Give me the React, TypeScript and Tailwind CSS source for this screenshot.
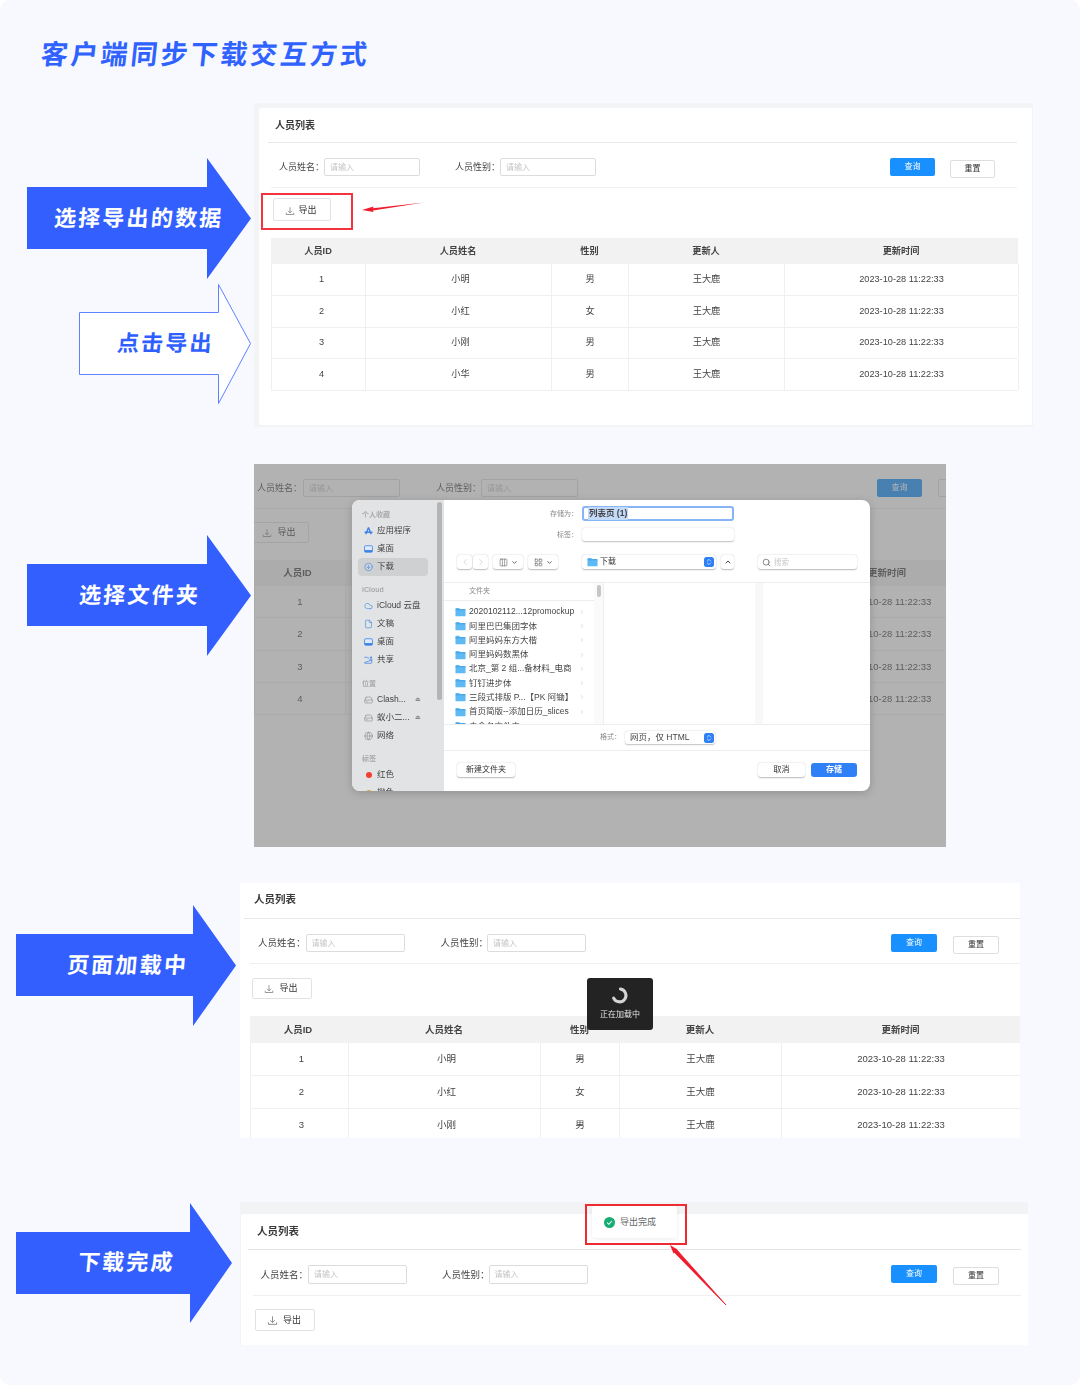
import React from 'react';
import { ChevronLeft, ChevronRight, ChevronDown, ChevronUp, ChevronsUpDown, Search, Columns3, LayoutGrid, Cloud, File, HardDrive, Globe, CircleArrowDown } from 'lucide-react';

function DownloadIcon({ cls }: { cls: string }) {
  return (
    <svg viewBox="0 0 12 12" className={cls} fill="none" stroke="#666" strokeWidth="0.8">
      <path d="M6 1.5V8M3.6 5.8 6 8.2l2.4-2.4M1.5 8v2.2h9V8" />
    </svg>
  );
}

function BlockArrow({ cls, points, fill, stroke, textCls, text }: { cls: string; points: string; fill: string; stroke?: string; textCls: string; text: string }) {
  return (
    <div className={`relative flex shrink-0 items-center ${cls}`}>
      <svg className="absolute inset-0 h-full w-full">
        <polygon points={points} fill={fill} stroke={stroke ?? 'none'} strokeWidth="1" />
      </svg>
      <span className={`relative inline-block -skew-x-[5deg] whitespace-nowrap text-[22px] font-bold leading-none tracking-[2.2px] ${textCls}`}>{text}</span>
    </div>
  );
}

function Title({ cls }: { cls: string }) {
  return <div className={`flex shrink-0 items-center font-bold text-[#3a3a3a] ${cls}`}>人员列表</div>;
}

function Filters({ rowCls, labelCls, inputCls, groupCls, queryCls, resetCls }: { rowCls: string; labelCls: string; inputCls: string; groupCls: string; queryCls: string; resetCls: string }) {
  const field = (label: string, extra: string) => (
    <div className={`flex shrink-0 items-center ${extra}`}>
      <span className={`whitespace-nowrap pt-px text-[#444] ${labelCls}`}>{label}：</span>
      <span className={`flex items-center rounded-[2px] border border-[#dcdcdc] bg-white pl-[5px] pt-px text-[8px] text-[#c4c4c4] ${inputCls}`}>请输入</span>
    </div>
  );
  return (
    <div className={`flex shrink-0 items-start ${rowCls}`}>
      {field('人员姓名', '')}
      {field('人员性别', groupCls)}
      <span className={`ml-auto flex shrink-0 items-center justify-center rounded-[2px] bg-[#1890ff] text-[8px] text-white ${queryCls}`}>查询</span>
      <span className={`flex shrink-0 items-center justify-center rounded-[2px] border border-[#dedede] bg-white text-[8px] text-[#333] ${resetCls}`}>重置</span>
    </div>
  );
}

function ExportButton({ cls, iconCls, textCls }: { cls: string; iconCls: string; textCls: string }) {
  return (
    <div className={`flex shrink-0 items-center justify-center rounded-[2px] border border-[#e2e2e2] bg-white text-[#333] ${cls}`}>
      <DownloadIcon cls={iconCls} />
      <span className={textCls}>导出</span>
    </div>
  );
}

const people = [
  ['1', '小明', '男'],
  ['2', '小红', '女'],
  ['3', '小刚', '男'],
  ['4', '小华', '男'],
];

function PeopleTable({ cls, gridCls, headCls, rowCls, head1, cell1, cell2, textCls }: { cls: string; gridCls: string; headCls: string; rowCls: string; head1?: string; cell1: string; cell2: string; textCls: string }) {
  const cell = 'flex items-center justify-center border-r border-[#f0f0f0]';
  return (
    <div className={`shrink-0 ${cls} ${textCls}`}>
      <div className={`grid bg-[#f2f2f2] font-bold text-[#444] ${gridCls} ${headCls}`}>
        <div className={`flex items-center justify-center ${head1 ?? ''}`}>人员ID</div>
        <div className="flex items-center justify-center">人员姓名</div>
        <div className="flex items-center justify-center">性别</div>
        <div className="flex items-center justify-center">更新人</div>
        <div className="flex items-center justify-center">更新时间</div>
      </div>
      {people.map((p) => (
        <div key={p[0]} className={`grid border-b border-l border-[#f0f0f0] text-[#444] ${gridCls} ${rowCls}`}>
          <div className={`${cell} ${cell1}`}>{p[0]}</div>
          <div className={`${cell} ${cell2}`}>{p[1]}</div>
          <div className={cell}>{p[2]}</div>
          <div className={cell}>王大鹿</div>
          <div className={cell}>2023-10-28 11:22:33</div>
        </div>
      ))}
    </div>
  );
}

function Folder() {
  return (
    <svg viewBox="0 0 12 10" className="h-[10px] w-[11px] shrink-0">
      <path d="M0.5 1.5Q0.5 .5 1.5 .5H4.5L5.5 1.6H10.5Q11.5 1.6 11.5 2.6V9Q11.5 9.7 10.5 9.7H1.5Q.5 9.7 .5 9Z" fill="#5fb9f2" />
      <path d="M.5 2.6H11.5" stroke="#2f8fd6" strokeWidth=".6" />
    </svg>
  );
}

function DesktopIcon() {
  return (
    <svg viewBox="0 0 10 10" className="h-[10px] w-[10px]">
      <rect x=".6" y="1.4" width="8.8" height="7.2" rx="1.2" fill="#dfe9fb" stroke="#3b82e8" strokeWidth=".9" />
      <rect x="1" y="6.2" width="8" height="2.2" fill="#3b82e8" />
    </svg>
  );
}

function ShareIcon() {
  return (
    <svg viewBox="0 0 11 10" className="h-[10px] w-[10px]" fill="none" stroke="#3b82e8" strokeWidth=".9">
      <path d="M.6 2.4Q.6 1.6 1.4 1.6H3.6L4.4 2.6H6.4M9.4 5V8.2Q9.4 9 8.6 9H1.4Q.6 9 .6 8.2Z" />
      <circle cx="8.6" cy="1.8" r="1.2" fill="#3b82e8" stroke="none" />
      <path d="M6.8 4.6Q8.6 2.8 10.4 4.6" strokeWidth="1" />
    </svg>
  );
}

function SideLabel({ cls, text }: { cls: string; text: string }) {
  return <div className={`flex h-[13px] items-center pl-[10px] text-[7px] font-bold text-[#a9aaac] ${cls}`}>{text}</div>;
}

function SideItem({ icon, text, active, eject }: { icon: React.ReactNode; text: string; active?: boolean; eject?: boolean }) {
  return (
    <div className={`ml-[6px] flex h-[18px] w-[70px] items-center gap-[4px] rounded-[4px] pl-[6px] text-[8.5px] text-[#444] ${active ? 'bg-[#cfd0d1]' : ''}`}>
      <span className="flex w-[9px] shrink-0 justify-center">{icon}</span>
      <span className="whitespace-nowrap">{text}</span>
      {eject && <span className="ml-auto mr-[7px] text-[6px] text-[#888]">⏏</span>}
    </div>
  );
}

const blueIcon = 'h-[10px] w-[10px] text-[#4a90e8]';
const grayIcon = 'h-[10px] w-[10px] text-[#8a8a8a]';

function MiniBtn({ cls, children }: { cls: string; children: React.ReactNode }) {
  return <div className={`flex h-[14px] shrink-0 items-center justify-center rounded-[3px] bg-white shadow-[0_0.5px_1.5px_rgba(0,0,0,0.28)] ${cls}`}>{children}</div>;
}

function BlueStepper({ cls }: { cls: string }) {
  return (
    <span className={`flex h-[10px] w-[10px] items-center justify-center rounded-[2.5px] bg-[#2f80f7] ${cls}`}>
      <ChevronsUpDown className="h-[8px] w-[8px] text-white" strokeWidth={2} />
    </span>
  );
}

const folders = ['2020102112...12promockup', '阿里巴巴集团字体', '阿里妈妈东方大楷', '阿里妈妈数黑体', '北京_第 2 组...备材料_电商', '钉钉进步体', '三段式排版 P...【PK 阿锄】', '首页简版--添加日历_slices', '未命名文件夹'];

function SaveDialog() {
  return (
    <div className="absolute left-[98px] top-[36px] flex h-[291px] w-[518px] overflow-hidden rounded-[8px] bg-white shadow-[0_2px_8px_rgba(0,0,0,0.18)] blur-[0.3px]">
      <div className="relative w-[92px] shrink-0 overflow-hidden bg-[#e2e3e4] pt-[8.5px]">
        <div className="absolute right-[2px] top-[2px] h-[198px] w-[5px] rounded-full bg-[#b4b5b6]" />
        <SideLabel cls="" text="个人收藏" />
        <SideItem text="应用程序" icon={<svg viewBox="0 0 10 10" className="h-[10px] w-[10px]" fill="none" stroke="#3b82e8" strokeWidth="1.5"><path d="M5 1 2 8.6M5 1l3 7.6M.6 6.4h8.8" /></svg>} />
        <SideItem text="桌面" icon={<DesktopIcon />} />
        <SideItem text="下载" active icon={<CircleArrowDown className={blueIcon} strokeWidth={1.8} />} />
        <SideLabel cls="mt-[8px]" text="iCloud" />
        <SideItem text="iCloud 云盘" icon={<Cloud className={blueIcon} strokeWidth={1.8} />} />
        <SideItem text="文稿" icon={<File className={blueIcon} strokeWidth={1.8} />} />
        <SideItem text="桌面" icon={<DesktopIcon />} />
        <SideItem text="共享" icon={<ShareIcon />} />
        <SideLabel cls="mt-[9px]" text="位置" />
        <SideItem text="Clash..." eject icon={<HardDrive className={grayIcon} strokeWidth={1.6} />} />
        <SideItem text="蚁小二..." eject icon={<HardDrive className={grayIcon} strokeWidth={1.6} />} />
        <SideItem text="网络" icon={<Globe className={grayIcon} strokeWidth={1.6} />} />
        <SideLabel cls="mt-[8px]" text="标签" />
        <SideItem text="红色" icon={<span className="h-[6px] w-[6px] rounded-full bg-[#f0402f]" />} />
        <SideItem text="橙色" icon={<span className="h-[6px] w-[6px] rounded-full bg-[#f0a030]" />} />
      </div>
      <div className="flex min-w-0 flex-1 flex-col">
        <div className="mt-[6px] flex h-[15px] shrink-0 items-center">
          <span className="w-[134px] pt-px text-right text-[7px] text-[#8a8a8a]">存储为：</span>
          <div className="ml-[4px] flex h-[15px] w-[152px] items-center rounded-[3px] border-2 border-[#86b4f6] pl-[4px] text-[8.5px] font-bold text-[#444]">
            <span className="bg-[#c3daf9] px-[1px]">列表页 (1)</span>
          </div>
        </div>
        <div className="mt-[7px] flex h-[13px] shrink-0 items-center">
          <span className="w-[134px] pt-[2px] text-right text-[7px] text-[#8a8a8a]">标签：</span>
          <div className="ml-[4px] h-[13px] w-[152px] rounded-[3px] bg-white shadow-[0_0.5px_1.5px_rgba(0,0,0,0.25)]" />
        </div>
        <div className="ml-[13px] mt-[14px] flex h-[14px] shrink-0 items-center">
          <MiniBtn cls="w-[15px]"><ChevronLeft className="h-[10px] w-[10px] text-[#bbb]" strokeWidth={1.4} /></MiniBtn>
          <MiniBtn cls="ml-[1px] w-[15px]"><ChevronRight className="h-[10px] w-[10px] text-[#bbb]" strokeWidth={1.4} /></MiniBtn>
          <MiniBtn cls="ml-[5px] w-[30px] gap-[3px]"><Columns3 className="h-[9px] w-[9px] text-[#666]" strokeWidth={1.6} /><ChevronDown className="h-[7px] w-[7px] text-[#555]" strokeWidth={3} /></MiniBtn>
          <MiniBtn cls="ml-[5px] w-[30px] gap-[3px]"><LayoutGrid className="h-[9px] w-[9px] text-[#777]" strokeWidth={2} /><ChevronDown className="h-[7px] w-[7px] text-[#555]" strokeWidth={3} /></MiniBtn>
          <MiniBtn cls="ml-[24px] w-[134px] justify-start pl-[5px]">
            <Folder />
            <span className="ml-[2px] text-[8px] text-[#333]">下载</span>
            <BlueStepper cls="ml-auto mr-[2px]" />
          </MiniBtn>
          <MiniBtn cls="ml-[5px] w-[13px]"><ChevronUp className="h-[8px] w-[8px] text-[#444]" strokeWidth={3} /></MiniBtn>
          <MiniBtn cls="ml-[24px] w-[99px] justify-start pl-[4px]">
            <Search className="h-[9px] w-[9px] text-[#666]" strokeWidth={2} />
            <span className="ml-[3px] pt-px text-[7.5px] text-[#c8c8c8]">搜索</span>
          </MiniBtn>
        </div>
        <div className="mt-[13px] flex h-[143px] shrink-0 border-y border-[#eeeeee]">
          <div className="w-[150px] shrink-0 overflow-hidden">
            <div className="flex h-[18px] items-center border-b border-[#eeeeee] pl-[25px] text-[7px] text-[#8a8a8a]">文件夹</div>
            <div className="pt-[3.5px]">
              {folders.map((f) => (
                <div key={f} className="flex h-[14.3px] items-center pl-[11px] text-[8.5px] text-[#444]">
                  <Folder />
                  <span className="ml-[3px] whitespace-nowrap">{f}</span>
                  <ChevronRight className="ml-auto mr-[9px] h-[6px] w-[6px] text-[#bbb]" strokeWidth={2} />
                </div>
              ))}
            </div>
          </div>
          <div className="w-[10px] shrink-0 border-r border-[#eeeeee] bg-[#fafafa] pl-[3px] pt-[2px]">
            <div className="h-[12px] w-[4px] rounded-full bg-[#c6c6c6]" />
          </div>
          <div className="w-[151px] shrink-0" />
          <div className="w-[8px] shrink-0 bg-[#f8f8f8]" />
        </div>
        <div className="flex h-[26px] shrink-0 items-center border-b border-[#eeeeee]">
          <span className="w-[177px] text-right text-[7px] text-[#8a8a8a]">格式：</span>
          <div className="ml-[4px] flex h-[13px] w-[90px] items-center rounded-[3px] bg-white pl-[5px] text-[8.5px] text-[#444] shadow-[0_0.5px_1.5px_rgba(0,0,0,0.25)]">
            网页，仅 HTML
            <BlueStepper cls="ml-auto mr-[1px]" />
          </div>
        </div>
        <div className="flex shrink-0 pl-[13px] pt-[12px]">
          <MiniBtn cls="w-[58px] text-[8px] text-[#333]">新建文件夹</MiniBtn>
          <MiniBtn cls="ml-[243px] w-[47px] text-[8px] text-[#333]">取消</MiniBtn>
          <div className="ml-[6px] flex h-[14px] w-[46px] items-center justify-center rounded-[3px] bg-[#2f80f7] text-[8px] font-bold text-white">存储</div>
        </div>
      </div>
    </div>
  );
}

export default function App() {
  return (
    <div className="h-[1385px] w-[1080px] overflow-hidden bg-white font-['Liberation_Sans','Noto_Sans_CJK_SC',sans-serif]">
      <div className="h-full w-full overflow-hidden rounded-[10px] bg-[#f7f9fe]">
        <div className="flex h-[103px] items-start pl-[41px] pt-[36px]">
          <h1 className="inline-block -skew-x-[6deg] text-[27px] font-bold leading-[38px] tracking-[2.9px] text-[#2f62ff]">客户端同步下载交互方式</h1>
        </div>

        {/* step 1 */}
        <section className="flex h-[324px]">
          <div className="flex w-[254px] shrink-0 flex-col pl-[27px] pt-[55px]">
            <BlockArrow cls="h-[121px] w-[224px] pl-[27px]" fill="#335fff" points="0,29 180,29 180,0 224,60.5 180,121 180,91 0,91" textCls="text-white" text="选择导出的数据" />
            <BlockArrow cls="ml-[52px] mt-[5px] h-[120px] w-[172px] pl-[38px]" fill="#ffffff" stroke="#5f83ff" points="0.5,28.5 139.5,28.5 139.5,0.5 171.5,59.5 139.5,119.5 139.5,90.5 0.5,90.5" textCls="text-[#2f5fff]" text="点击导出" />
          </div>
          <div className="relative h-[324px] w-[779px] shrink-0 bg-[#f3f4f6] pl-[5px] pt-[5px]">
            <div className="flex h-[317px] w-[773px] flex-col rounded-[2px] bg-white blur-[0.35px]">
              <Title cls="h-[34px] pl-[16px] text-[10px]" />
              <div className="ml-[9px] mr-[15px] h-px shrink-0 bg-[#e8e8e8]" />
              <Filters rowCls="h-[44px] pl-[20px] pr-[37px] pt-[15px]" labelCls="text-[9px]" inputCls="h-[18px] w-[96px]" groupCls="ml-[35px]" queryCls="h-[18px] w-[45px]" resetCls="ml-[15px] mt-[2px] h-[18px] w-[45px]" />
              <div className="ml-[12px] mr-[15px] h-px shrink-0 bg-[#efefef]" />
              <div className="h-[50px] shrink-0 pl-[14px] pt-[10px]">
                <ExportButton cls="h-[23px] w-[58px] gap-[3px] pr-[2px] pt-[2px]" iconCls="h-[10px] w-[10px]" textCls="text-[9px]" />
              </div>
              <PeopleTable cls="ml-[12px] w-[747px]" gridCls="grid-cols-[94px_186px_77px_156px_234px]" headCls="h-[26px] [&>div]:pt-[2px]" rowCls="h-[31.75px] [&>div]:pt-px" cell1="pl-[6px]" cell2="pl-[4px]" textCls="text-[9.2px]" />
            </div>
            <div className="absolute left-[7px] top-[90px] h-[37px] w-[92px] border-2 border-[#f5333f]" />
            <svg className="absolute left-[104px] top-[96px] h-[16px] w-[70px]" viewBox="0 0 70 16">
              <polygon points="66,3.6 15,9.2 15.5,7.4 4,11 15.5,13 15,11.4" fill="#f01c2c" />
            </svg>
          </div>
        </section>

        {/* step 2 */}
        <section className="mt-[37px] flex h-[383px]">
          <div className="w-[254px] shrink-0 pl-[27px] pt-[71px]">
            <BlockArrow cls="h-[121px] w-[224px] pl-[52px]" fill="#335fff" points="0,29 180,29 180,0 224,60.5 180,121 180,91 0,91" textCls="text-white" text="选择文件夹" />
          </div>
          <div className="relative h-[383px] w-[692px] shrink-0 overflow-hidden bg-white">
            <div className="flex h-full w-[760px] flex-col pt-0 blur-[0.35px]">
              <Filters rowCls="h-[44px] w-[729px] pl-[3px] pt-[15px]" labelCls="text-[9px]" inputCls="ml-[1px] h-[18px] w-[97px]" groupCls="ml-[36px] [&>span:last-child]:!ml-0" queryCls="h-[18px] w-[45px]" resetCls="ml-[16px] h-[18px] w-[45px]" />
              <div className="h-px shrink-0 bg-[#efefef]" />
              <div className="h-[51px] shrink-0 pt-[13px]">
                <ExportButton cls="-ml-[5px] h-[21px] w-[60px] gap-[5px] pt-px" iconCls="h-[10px] w-[10px]" textCls="text-[9px]" />
              </div>
              <PeopleTable cls="w-[750px]" gridCls="grid-cols-[91px_180px_80px_165px_234px]" headCls="h-[26px] [&>div]:pt-px" rowCls="h-[32.3px] [&>div]:pt-px" head1="pr-[4px]" cell1="" cell2="" textCls="text-[9.5px]" />
            </div>
            <div className="absolute inset-0 bg-[#737373]/[0.55]" />
            <SaveDialog />
          </div>
        </section>

        {/* step 3 */}
        <section className="mt-[36px] flex h-[255px]">
          <div className="w-[240px] shrink-0 pl-[16px] pt-[22px]">
            <BlockArrow cls="h-[121px] w-[220px] pl-[51px]" fill="#335fff" points="0,29 177,29 177,0 220,60.5 177,121 177,91 0,91" textCls="text-white" text="页面加载中" />
          </div>
          <div className="relative h-[255px] w-[780px] shrink-0 overflow-hidden bg-white">
            <div className="flex flex-col blur-[0.35px]">
              <Title cls="h-[34px] pl-[14px] text-[10.5px]" />
              <div className="ml-[4px] mt-px h-px shrink-0 bg-[#e8e8e8]" />
              <Filters rowCls="h-[44px] pl-[18px] pr-[21px] pt-[15px]" labelCls="text-[9.5px]" inputCls="h-[18px] w-[99px]" groupCls="ml-[36px] [&>span:last-child]:-ml-px" queryCls="h-[18px] w-[46px]" resetCls="ml-[16px] mt-[2px] h-[18px] w-[46px]" />
              <div className="ml-[10px] h-px shrink-0 bg-[#efefef]" />
              <div className="h-[52px] shrink-0 pl-[12px] pt-[14px]">
                <ExportButton cls="h-[21px] w-[60px] gap-[5px] pr-[2px] pt-px" iconCls="h-[10px] w-[10px]" textCls="text-[9px]" />
              </div>
              <PeopleTable cls="ml-[10px] w-[770px]" gridCls="grid-cols-[98px_192px_79px_162px_239px]" headCls="h-[27px] [&>div]:pt-px" rowCls="h-[33px]" head1="pr-[2px]" cell1="pl-[4px]" cell2="pl-[4px]" textCls="text-[9.5px]" />
            </div>
            <div className="absolute left-[347px] top-[95px] flex h-[52px] w-[66px] flex-col items-center rounded-[3px] bg-[#232323] pt-[8px] blur-[0.3px]">
              <svg viewBox="0 0 20 20" className="h-[19px] w-[19px] -translate-x-px" fill="none" stroke="#d4d4d4" strokeWidth="3.2" strokeLinecap="round">
                <path d="M11 3.2a6.8 6.8 0 1 1-7.2 9.6" />
              </svg>
              <span className="mt-[4px] text-[8px] text-[#e6e6e6]">正在加载中</span>
            </div>
          </div>
        </section>

        {/* step 4 */}
        <section className="mt-[64px] flex h-[143px]">
          <div className="w-[240px] shrink-0 pl-[16px] pt-[1px]">
            <BlockArrow cls="h-[120px] w-[216px] pl-[62px]" fill="#335fff" points="0,29 174,29 174,0 216,60 174,120 174,91 0,91" textCls="text-white" text="下载完成" />
          </div>
          <div className="relative h-[143px] w-[788px] shrink-0 bg-[#f2f3f5] pl-px pt-[12px]">
            <div className="flex h-[131px] flex-col rounded-tl-[2px] bg-white blur-[0.35px]">
              <Title cls="h-[35px] pl-[16px] text-[10.5px]" />
              <div className="ml-[7px] mr-[7px] h-px shrink-0 bg-[#e4e4e4]" />
              <Filters rowCls="h-[45px] pl-[19.5px] pr-[29px] pt-[15px]" labelCls="text-[9.5px]" inputCls="h-[19px] w-[99px]" groupCls="ml-[35px] [&>span:last-child]:-ml-px" queryCls="h-[18px] w-[46px]" resetCls="ml-[16px] mt-[2px] h-[18px] w-[46px]" />
              <div className="ml-[12px] mr-[7px] h-px shrink-0 bg-[#efefef]" />
              <div className="pl-[14px] pt-[13px]">
                <ExportButton cls="h-[22px] w-[60px] gap-[5px] pr-[2px] pt-px" iconCls="h-[11px] w-[11px]" textCls="text-[9px]" />
              </div>
            </div>
            <div className="absolute left-[352px] top-[4px] flex h-[32px] w-[85px] items-center rounded-[3px] bg-white pl-[12px] shadow-[0_1px_4px_rgba(0,0,0,0.08)]">
              <svg viewBox="0 0 12 12" className="h-[11px] w-[11px]"><circle cx="6" cy="6" r="6" fill="#16ad73" /><path d="M3.4 6.2 5.3 8l3.3-3.6" fill="none" stroke="#fff" strokeWidth="1.1" /></svg>
              <span className="ml-[5px] pt-px text-[9px] text-[#666]">导出完成</span>
            </div>
            <div className="absolute left-[345px] top-[2px] h-[41px] w-[102px] border-2 border-[#ee2a33]" />
            <svg className="absolute left-[426px] top-[40px] h-[66px] w-[64px]" viewBox="0 0 64 66">
              <polygon points="60,63 10,9 11.5,7.5 4,3 7.5,11.5 8.8,10.5" fill="#f01c2c" />
              <polygon points="60,63 8.5,10.5 11,8" fill="#f01c2c" stroke="#f01c2c" strokeWidth="0.8" />
            </svg>
          </div>
        </section>
      </div>
    </div>
  );
}
